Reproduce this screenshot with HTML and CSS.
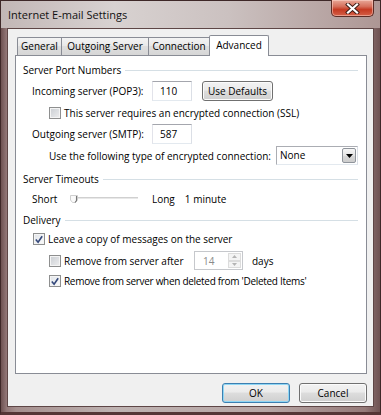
FILE: index.html
```html
<!DOCTYPE html>
<html lang="en">
  <head>
    <meta charset="UTF-8" />
    <title>Internet E-mail Settings</title>
    <link rel="stylesheet" href="styles.css">
  </head>
  <body>
    <div class="window">
      <header class="titlebar">
        <span class="title">Internet E-mail Settings</span>
        <span class="close">
          <svg width="15" height="11" viewBox="0 0 15 11">
            <path d="M3 1.5 L12 9.5 M12 1.5 L3 9.5" stroke="#3a1a14" stroke-width="4" stroke-linecap="square" />
            <path d="M3 1.5 L12 9.5 M12 1.5 L3 9.5" stroke="#ffffff" stroke-width="2.2" stroke-linecap="square" />
          </svg>
        </span>
      </header>

      <main class="client">
        <nav class="tabs">
          <span class="tab t-general">General</span>
          <span class="tab t-outgoing">Outgoing Server</span>
          <span class="tab t-connection">Connection</span>
          <span class="tab active">Advanced</span>
        </nav>

        <section class="panel">
          <div class="group"><span>Server Port Numbers</span></div>

          <div class="row r-incoming">
            <span class="lbl">Incoming server (POP3):</span>
            <span class="field port">110</span>
            <span class="btn defaults">Use Defaults</span>
          </div>

          <div class="row r-ssl indent2">
            <span class="check"></span>
            <span class="cap">This server requires an encrypted connection (SSL)</span>
          </div>

          <div class="row r-outgoing">
            <span class="lbl">Outgoing server (SMTP):</span>
            <span class="field port">587</span>
          </div>

          <div class="row r-enc indent2">
            <span class="enc-lbl">Use the following type of encrypted connection:</span>
            <span class="select">
              <span class="select-val">None</span>
              <span class="select-btn">
                <svg width="7" height="4" viewBox="0 0 7 4"><path d="M0 0 H7 L3.5 4 Z" fill="#000" /></svg>
              </span>
            </span>
          </div>

          <div class="group g-timeouts"><span>Server Timeouts</span></div>

          <div class="row r-short">
            <span class="short">Short</span>
            <span class="slider">
              <svg width="72" height="12" viewBox="0 0 72 12">
                <rect x="4" y="4" width="66" height="2" fill="#e8e8e8" />
                <line x1="4" y1="4.5" x2="70" y2="4.5" stroke="#d0d0d0" />
                <path d="M2.5 2.5 H9.5 V7 L7.5 9.5 H4.5 L2.5 7 Z" fill="#fafafa" stroke="#cfcfcf" />
                <path d="M8.5 3 V7.5 L7 9.5" fill="none" stroke="#777" stroke-width="1.1" />
              </svg>
            </span>
            <span class="long">Long</span>
            <span class="minute">1 minute</span>
          </div>

          <div class="group g-delivery"><span>Delivery</span></div>

          <div class="row r-leave indent1">
            <span class="check checked">
              <svg width="11" height="11" viewBox="0 0 11 11"><path d="M2 5.5 L4.5 8.5 L9 2" fill="none" stroke="#34487a" stroke-width="1.8" /></svg>
            </span>
            <span class="cap">Leave a copy of messages on the server</span>
          </div>

          <div class="row r-after indent2">
            <span class="check"></span>
            <span class="cap after-lbl">Remove from server after</span>
            <span class="spin">
              <span class="spin-val">14</span>
              <span class="spin-btns">
                <span class="spin-b">
                  <svg width="5" height="3" viewBox="0 0 5 3"><path d="M0 3 H5 L2.5 0 Z" fill="#b4b4b4" /></svg>
                </span>
                <span class="spin-b">
                  <svg width="5" height="3" viewBox="0 0 5 3"><path d="M0 0 H5 L2.5 3 Z" fill="#b4b4b4" /></svg>
                </span>
              </span>
            </span>
            <span class="days">days</span>
          </div>

          <div class="row r-deleted indent2">
            <span class="check checked">
              <svg width="11" height="11" viewBox="0 0 11 11"><path d="M2 5.5 L4.5 8.5 L9 2" fill="none" stroke="#34487a" stroke-width="1.8" /></svg>
            </span>
            <span class="cap tight">Remove from server when deleted from 'Deleted Items'</span>
          </div>
        </section>

        <footer class="buttons">
          <span class="btn ok">OK</span>
          <span class="btn cancel">Cancel</span>
        </footer>
      </main>
    </div>
  </body>
</html>
```

FILE: styles.css
```css
body {
  margin: 0;
  padding: 0;
  font-family: "Open Sans", "DejaVu Sans", sans-serif;
  font-size: 10px;
  color: #000;
}

.window {
  width: 381px;
  height: 415px;
  box-sizing: border-box;
  border: 1px solid #3e2828;
  border-bottom: 3px solid #553636;
  background: linear-gradient(90deg, #6e5252 0%, #937878 1.5%, #a58f8e 4%, #bfb3b2 30%, #b7a6a5 70%, #957a79 96%, #6e5252 100%);
  display: flex;
  flex-direction: column;
}

.titlebar {
  height: 27px;
  display: flex;
  justify-content: space-between;
  align-items: flex-start;
  background: linear-gradient(90deg, #c2b7b6 0%, #d8d2d1 30%, #cbc1c0 60%, #ad9694 100%);
}

.title {
  font-size: 11px;
  margin: 6px 0 0 7px;
  color: #111;
}

.close {
  width: 43px;
  height: 17px;
  margin: -1px 6px 0 0;
  box-sizing: border-box;
  border: 1px solid #5a2c25;
  border-top: none;
  border-radius: 0 0 5px 5px;
  background: linear-gradient(#e8a898 0%, #d6705c 40%, #c53a22 60%, #d46048 100%);
  box-shadow: inset 0 0 0 1px rgba(255, 220, 210, 0.5);
  display: flex;
  align-items: center;
  justify-content: center;
}

.client {
  margin: 0 6px;
  height: 379px;
  box-sizing: border-box;
  border: 1px solid #5e4646;
  background-color: #f0f0f0;
  padding: 6px 6px 0 7px;
}

/* tabs */

.tabs {
  display: flex;
  align-items: flex-end;
  height: 20px;
  padding-left: 2px;
  position: relative;
  z-index: 1;
}

.tab {
  height: 18px;
  box-sizing: border-box;
  border: 1px solid #898c95;
  border-bottom: none;
  border-right: none;
  background: linear-gradient(#f3f3f3, #e8e8e8 50%, #dedede 50%, #d6d6d6);
  text-align: center;
  line-height: 17px;
}

.t-general {
  width: 44px;
  border-radius: 2px 0 0 0;
}

.t-outgoing {
  width: 87px;
}

.t-connection {
  width: 61px;
}

.tab.active {
  width: 60px;
  height: 21px;
  margin-bottom: -1px;
  background: #fff;
  border-right: 1px solid #898c95;
  border-radius: 2px 2px 0 0;
  line-height: 18px;
}

.panel {
  height: 319px;
  box-sizing: border-box;
  border: 1px solid #898c95;
  background-color: #fff;
  padding: 7px 8px 0 7px;
}

/* group headings */

.group {
  height: 14px;
  display: flex;
  align-items: center;
  line-height: 14px;
}

.group::after {
  content: "";
  flex: 1;
  height: 1px;
  margin-left: 4px;
  background-color: #d5dfe5;
}

.g-timeouts {
  margin-top: 7px;
}

.g-delivery {
  margin-top: 6px;
}

/* rows */

.row {
  display: flex;
  align-items: center;
}

.r-incoming {
  height: 20px;
  margin-top: 4px;
  padding-left: 9px;
}

.r-ssl {
  height: 14px;
  margin-top: 5px;
}

.r-outgoing {
  height: 20px;
  margin-top: 4px;
  padding-left: 9px;
}

.r-enc {
  height: 19px;
  margin-top: 2px;
}

.r-short {
  height: 16px;
  margin-top: 5px;
  padding-left: 9px;
}

.r-leave {
  height: 14px;
  margin-top: 5px;
}

.r-after {
  height: 19px;
  margin-top: 5px;
}

.r-deleted {
  height: 14px;
  margin-top: 4px;
}

.indent1 {
  padding-left: 10px;
}

.indent2 {
  padding-left: 26px;
}

.lbl {
  width: 120px;
}

.field {
  height: 20px;
  box-sizing: border-box;
  border: 1px solid #abadb3;
  border-top-color: #a4a6ad;
  border-right-color: #dbdfe6;
  border-bottom-color: #e3e9ef;
  border-left-color: #e2e3ea;
  background-color: #fff;
  line-height: 18px;
  padding-left: 7px;
}

.port {
  width: 40px;
}

.btn {
  box-sizing: border-box;
  border: 1px solid #707070;
  border-radius: 3px;
  background: linear-gradient(#f2f2f2 0%, #ebebeb 45%, #dddddd 50%, #cfcfcf 100%);
  box-shadow: inset 0 0 0 1px #fbfbfb;
  text-align: center;
}

.defaults {
  width: 71px;
  height: 20px;
  line-height: 18px;
  margin-left: 10px;
}

.check {
  width: 12px;
  height: 12px;
  box-sizing: border-box;
  border: 1px solid #8e8f8f;
  background: linear-gradient(135deg, #c9cdd2, #eeeeef);
  box-shadow: inset 0 0 0 1px #f4f4f4;
  display: flex;
  align-items: center;
  justify-content: center;
  flex-shrink: 0;
}

.check.checked {
  background: linear-gradient(135deg, #dfe3e8, #fbfbfb);
}

.cap {
  margin-left: 3px;
}

.tight {
  letter-spacing: -0.3px;
}

.enc-lbl {
  width: 227px;
}

.select {
  width: 82px;
  height: 19px;
  box-sizing: border-box;
  border: 1px solid #abadb3;
  border-right-color: #dbdfe6;
  border-bottom-color: #e3e9ef;
  background-color: #fff;
  display: flex;
  align-items: center;
  padding: 1px;
}

.select-val {
  flex: 1;
  padding-left: 2px;
  line-height: 15px;
}

.select-btn {
  width: 14px;
  height: 15px;
  box-sizing: border-box;
  border: 1px solid #8f949b;
  border-radius: 2px;
  background: linear-gradient(#f6f6f6, #e4e4e4 50%, #d8d8d8 50%, #cdcdcd);
  display: flex;
  align-items: center;
  justify-content: center;
}

.short {
  width: 36px;
}

.slider {
  display: flex;
  width: 84px;
}

.minute {
  margin-left: 10px;
}

.after-lbl {
  width: 130px;
}

.spin {
  width: 49px;
  height: 19px;
  box-sizing: border-box;
  border: 1px solid #c6c8cc;
  background-color: #fff;
  display: flex;
  padding: 1px;
}

.spin-val {
  flex: 1;
  color: #8a8a8a;
  line-height: 16px;
  padding-left: 7px;
}

.spin-btns {
  width: 13px;
  display: flex;
  flex-direction: column;
}

.spin-b {
  flex: 1;
  box-sizing: border-box;
  border: 1px solid #dcdcdc;
  background-color: #f4f4f4;
  display: flex;
  align-items: center;
  justify-content: center;
}

.days {
  margin-left: 9px;
}

/* dialog buttons */

.buttons {
  display: flex;
  justify-content: flex-end;
  gap: 9px;
  margin-top: 9px;
}

.buttons .btn {
  width: 68px;
  height: 20px;
  line-height: 18px;
}

.ok {
  border-color: #3c7fb1;
  box-shadow: inset 0 0 0 1px #8fd6f4;
}
```
